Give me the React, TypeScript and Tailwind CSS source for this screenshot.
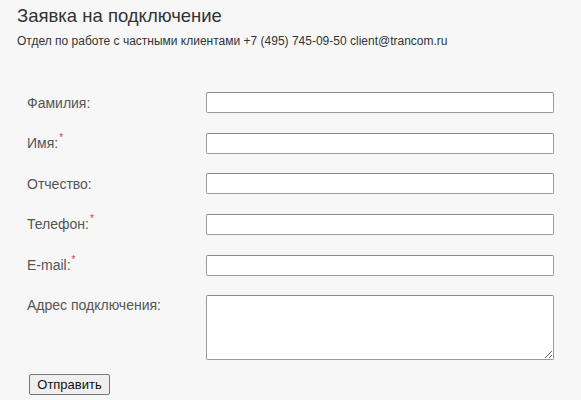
import React from "react";

const rows: { label: string; req?: boolean }[] = [
  { label: "Фамилия:" },
  { label: "Имя:", req: true },
  { label: "Отчество:" },
  { label: "Телефон:", req: true },
  { label: "E-mail:", req: true },
];

export default function App() {
  return (
    <div
      className="w-[581px] h-[400px] bg-[#f7f7f7] overflow-hidden"
      style={{ fontFamily: '"Liberation Sans", Arial, sans-serif' }}
    >
      <div className="pl-[17px] pt-[5px]">
        <h1 className="text-[18.5px] leading-[21px] text-[#333]">Заявка на подключение</h1>
        <p className="mt-[8px] text-[12px] leading-[14px] text-[#333]">
          Отдел по работе с частными клиентами +7 (495) 745-09-50 client@trancom.ru
        </p>
      </div>
      <div className="pl-[27px] pt-[44px] flex flex-col gap-[19.7px]">
        {rows.map((r) => (
          <div key={r.label} className="flex items-center h-[21px]">
            <label className="w-[179px] text-[14px] leading-[16px] text-[#555] pt-[1px]">
              {r.label}
              {r.req && (
                <span className="relative -top-[7px] ml-[1px] text-[10px] text-[#e23b3b]">*</span>
              )}
            </label>
            <input
              type="text"
              className="w-[348px] h-[21px] bg-white border border-[#9a9a9a] border-t-[#8a8a8a] rounded-[2px] outline-none"
            />
          </div>
        ))}
        <div className="flex items-start">
          <label className="w-[179px] text-[14px] leading-[16px] text-[#555] pt-[2px]">
            Адрес подключения:
          </label>
          <textarea className="w-[348px] h-[65px] bg-white border border-[#9a9a9a] border-t-[#8a8a8a] rounded-[2px] outline-none resize" />
        </div>
      </div>
      <div className="pl-[29px] pt-[12px]">
        <button className="w-[81px] h-[21px] bg-[#efefef] border border-[#767676] rounded-[2px] text-[13px] leading-[15px] text-[#111]">
          Отправить
        </button>
      </div>
    </div>
  );
}
